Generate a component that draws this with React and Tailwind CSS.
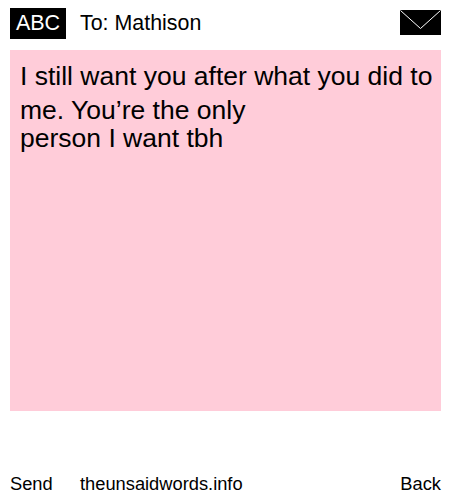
const App = () => {
  return (
    <div className="w-[450px] h-[500px] bg-white text-black flex flex-col pl-[10px] pr-[9px] font-['Liberation_Sans',Arial,sans-serif]">
      <div className="h-[50px] flex items-start">
        <div className="mt-2 w-14 h-[31px] bg-black text-white text-[21.5px] leading-[31px] text-center">ABC</div>
        <div className="mt-2 ml-[14px] text-[21.4px] leading-[31px]">To: Mathison</div>
        <svg className="mt-[10px] ml-auto" width="41" height="25" viewBox="0 0 41 25">
          <rect width="41" height="25" fill="#000" />
          <path d="M0.5 0.5 L20.5 18.5 L40.5 0.5" fill="none" stroke="#fff" strokeWidth="1" />
        </svg>
      </div>
      <div className="h-[361px] bg-[#ffccd9] pl-[10px] pr-1 pt-[9px] text-[26.5px]">
        <div className="leading-[34px] whitespace-nowrap">I still want you after what you did to</div>
        <div className="leading-[34px]">me. You’re the only</div>
        <div className="leading-[22px]">person I want tbh</div>
      </div>
      <div className="mt-auto h-[27px] flex items-start text-[18.3px] leading-[21px]">
        <span className="w-[70px]">Send</span>
        <span>theunsaidwords.info</span>
        <span className="ml-auto">Back</span>
      </div>
    </div>
  );
};

export default App;
